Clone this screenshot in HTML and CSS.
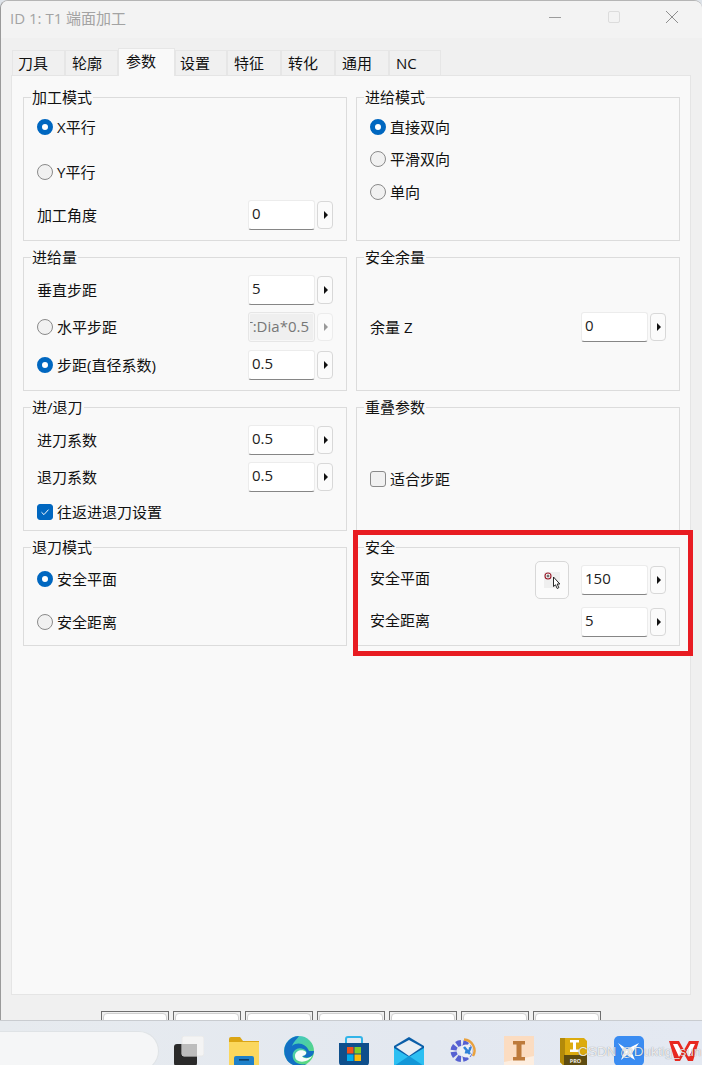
FILE: index.html
```html
<!DOCTYPE html>
<html lang="zh">
<head>
<meta charset="utf-8">
<title>ID 1: T1 端面加工</title>
<link rel="stylesheet" href="styles.css">
</head>
<body>
<div class="window">
  <header class="titlebar">
    <span class="title">ID 1: T1 端面加工</span>
    <div class="winbtns">
      <svg class="winbtn" viewBox="0 0 14 14"><path d="M0 7.5H12" stroke="#9c9c9c" fill="none"/></svg>
      <svg class="winbtn" viewBox="0 0 14 14"><rect x="1.500" y="1.500" width="11" height="11" rx="1.500" fill="#f3f3f3" stroke="#dcdcdc"/></svg>
      <svg class="winbtn" viewBox="0 0 14 14"><path d="M1 1L13 13M13 1L1 13" stroke="#8e8e8e" fill="none"/></svg>
    </div>
  </header>
  <nav class="tabs">
    <span class="tab narrow">刀具</span>
    <span class="tab narrow">轮廓</span>
    <span class="tab active">参数</span>
    <span class="tab tight">设置</span>
    <span class="tab">特征</span>
    <span class="tab">转化</span>
    <span class="tab">通用</span>
    <span class="tab last">NC</span>
  </nav>
  <main class="panel">
    <section class="group">
      <h3 class="legend">加工模式</h3>
      <div class="row t14"><i class="radio on"></i><span class="rl">X平行</span></div>
      <div class="row t15"><i class="radio"></i><span class="rl">Y平行</span></div>
      <div class="row t13"><span>加工角度</span><span class="field"><span class="input">0</span><span class="spin"><b></b></span></span></div>
    </section>
    <section class="group">
      <h3 class="legend">进给模式</h3>
      <div class="row t14"><i class="radio on"></i><span class="rl">直接双向</span></div>
      <div class="row t2"><i class="radio"></i><span class="rl">平滑双向</span></div>
      <div class="row t3"><i class="radio"></i><span class="rl">单向</span></div>
    </section>
    <section class="group">
      <h3 class="legend">进给量</h3>
      <div class="row t17"><span>垂直步距</span><span class="field"><span class="input">5</span><span class="spin"><b></b></span></span></div>
      <div class="row t7"><i class="radio"></i><span class="rl">水平步距</span><span class="field"><span class="input disabled">T:Dia*0.5</span><span class="spin off"><b></b></span></span></div>
      <div class="row t8"><i class="radio on"></i><span class="rl">步距(直径系数)</span><span class="field"><span class="input">0.5</span><span class="spin"><b></b></span></span></div>
    </section>
    <section class="group">
      <h3 class="legend">安全余量</h3>
      <div class="row t54"><span>余量 Z</span><span class="field"><span class="input">0</span><span class="spin"><b></b></span></span></div>
    </section>
    <section class="group">
      <h3 class="legend">进/退刀</h3>
      <div class="row t17"><span>进刀系数</span><span class="field"><span class="input">0.5</span><span class="spin"><b></b></span></span></div>
      <div class="row t7"><span>退刀系数</span><span class="field"><span class="input">0.5</span><span class="spin"><b></b></span></span></div>
      <div class="row t5"><i class="check on"><svg viewBox="0 0 16 16"><path d="M4 8.300L6.800 11L12 5.300" fill="none" stroke="#fff" stroke-width="1.100"/></svg></i><span class="rl">往返进退刀设置</span></div>
    </section>
    <section class="group">
      <h3 class="legend">重叠参数</h3>
      <div class="row t56"><i class="check"></i><span class="rl">适合步距</span></div>
    </section>
    <section class="group">
      <h3 class="legend">退刀模式</h3>
      <div class="row t16"><i class="radio on"></i><span class="rl">安全平面</span></div>
      <div class="row t13"><i class="radio"></i><span class="rl">安全距离</span></div>
    </section>
    <section class="group">
      <h3 class="legend">安全</h3>
      <div class="row t17"><span class="lift">安全平面</span>
        <span class="field">
          <span class="pick"><svg viewBox="0 0 26 26" width="26" height="26"><rect x="5" y="5" width="16" height="16" fill="#efefef"/><circle cx="9" cy="9" r="3" fill="#fff" stroke="#9a1c2a" stroke-width="1.100"/><path d="M7.500 9H10.500M9 7.500V10.500" stroke="#222" stroke-width=".8"/><path d="M14.500 10V19.500L16.500 17.800L18.200 21.500L19.800 20.700L18.200 17H20.800Z" fill="#fff" stroke="#111" stroke-width=".9"/></svg></span>
          <span class="input">150</span><span class="spin"><b></b></span>
        </span>
      </div>
      <div class="row t12"><span class="lift">安全距离</span><span class="field"><span class="input">5</span><span class="spin"><b></b></span></span></div>
    </section>
  </main>
  <div class="actions">
    <span class="action"><span></span></span>
    <span class="action"><span></span></span>
    <span class="action"><span></span></span>
    <span class="action"><span></span></span>
    <span class="action"><span></span></span>
    <span class="action"><span></span></span>
    <span class="action"><span></span></span>
  </div>
</div>
<footer class="taskbar">
  <div class="search"></div>
  <div class="icons">
    <svg class="ti" viewBox="0 0 30 30"><rect x="0" y="8" width="23" height="22" rx="3" fill="#2a2a2a"/><rect x="8" y="0" width="22" height="20" rx="2" fill="#f4f4f4" stroke="#e8e8e8"/><rect x="8" y="8" width="15" height="12" fill="#bdbdbd"/></svg>
    <svg class="ti" viewBox="0 0 30 30"><path d="M0 3a2 2 0 0 1 2-2h9l3 4h16v25H0Z" fill="#dba514"/><rect x="0" y="6" width="30" height="24" fill="#fbd75d"/><path d="M5 22a2 2 0 0 1 2-2h16a2 2 0 0 1 2 2v8H5Z" fill="#1e80c9"/><rect x="10" y="23" width="10" height="1.600" fill="#0b3c66"/></svg>
    <svg class="ti" viewBox="0 0 30 30"><defs><linearGradient id="eg" x1="0" y1="0" x2="1" y2="1"><stop offset="0" stop-color="#3bc2d8"/><stop offset="1" stop-color="#5fdc6c"/></linearGradient></defs><circle cx="15" cy="15" r="15" fill="url(#eg)"/><path d="M15 0A15 15 0 0 0 2 22C5 30 15 32 23 28C13 30 7 24 9 17C11 11 19 11 22 15C24 18 20 20 18 20C24 24 30 20 30 15H25C22 8 14 5 8 10C10 5 13 3 15 0Z" fill="#1270c4"/><path d="M11 20C11 14 19 13 22 16C23 19 19 20 18 20C20 23 24 23 28 20C25 27 11 28 11 20Z" fill="#fff" opacity=".95"/></svg>
    <svg class="ti" viewBox="0 0 30 30"><path d="M7 7V3a2 2 0 0 1 2-2h12a2 2 0 0 1 2 2v4" fill="none" stroke="#32b4e8" stroke-width="2"/><path d="M0 7H30V26a4 4 0 0 1-4 4H4a4 4 0 0 1-4-4Z" fill="#0f4f8c"/><rect x="8" y="11" width="6.500" height="6.500" fill="#f1511b"/><rect x="15.500" y="11" width="6.500" height="6.500" fill="#80cc28"/><rect x="8" y="18.500" width="6.500" height="6.500" fill="#00adef"/><rect x="15.500" y="18.500" width="6.500" height="6.500" fill="#fbbc09"/></svg>
    <svg class="ti" viewBox="0 0 30 30"><path d="M15 1L30 10V30H0V10Z" fill="#0a5ea8"/><path d="M2 11L15 4L28 11L15 20Z" fill="#e8eef4"/><path d="M0 12L15 21L30 12V30H0Z" fill="#2cbff2"/><path d="M0 30L15 20L30 30Z" fill="#1397d8"/></svg>
    <svg class="ti" viewBox="0 0 30 30"><circle cx="12.500" cy="15" r="8" fill="none" stroke="#5560d2" stroke-width="6" stroke-dasharray="4.500 2"/><path d="M15 3.500A11 11 0 0 1 24 20" fill="none" stroke="#e9a13d" stroke-width="2.400"/><circle cx="17" cy="15" r="6.500" fill="#eef1f5"/><path d="M15 11L21 18M21 11A4 4 0 0 1 16 16" fill="none" stroke="#2f83d8" stroke-width="2.600"/></svg>
    <svg class="ti" viewBox="0 0 30 30"><rect width="30" height="30" fill="#fdeee0"/><path d="M0 0H30V20L0 26Z" fill="#fbdcc1"/><path d="M9 5H21V8.500H17.500V21H21V24.500H9V21H12.500V8.500H9Z" fill="#bd7a3b"/></svg>
    <svg class="ti" viewBox="0 0 30 30"><path d="M2 2H25L28 5V30H5L1 26Z" fill="#dcab0f"/><path d="M1 2H6V30H5L1 26Z" fill="#b38a0a"/><rect x="5" y="19" width="23" height="11" fill="#5e4c10"/><path d="M11 4H20V6.500H17V13.500H20V16H11V13.500H14V6.500H11Z" fill="#fff"/><text x="16.500" y="27" class="protext">PRO</text></svg>
    <svg class="ti" viewBox="0 0 30 30"><rect width="30" height="30" rx="5" fill="#3a8cf2"/><path d="M4 7L13 13L25 7L18 17L21 24L13 19L7 24L10 16Z" fill="#fff"/></svg>
    <svg class="ti" viewBox="0 0 30 30"><path d="M0 5H10L15 14L20 5H30L24 25H19L15 18L11 25H6Z" fill="#e8291f"/><path d="M4 8H8.500L13 16L10 21ZM26 8H21.500L17 16L20 21Z" fill="#fff"/></svg>
  </div>
  <span class="watermark">CSDN @Duktig_sun</span>
</footer>
<div class="highlight"></div>
</body>
</html>
```
FILE: styles.css
```css
* { box-sizing: border-box; }
html, body { margin: 0; height: 1065px; overflow: hidden; }
body { position: relative; background: #dfe4ea; font-family: "Open Sans", "Noto Sans CJK SC", sans-serif; font-size: 15px; color: #111; }

.window { height: 1020px; overflow: hidden; background: #f0f0f0; border-left: 1px solid #9a9a9a; border-top: 1px solid #b5b5b5; border-top-left-radius: 8px; border-top-right-radius: 8px; }

.titlebar { height: 37px; background: #f3f3f3; display: flex; align-items: center; justify-content: space-between; }
.title { margin-left: 9px; margin-top: -4px; color: #a3a3a3; line-height: 36px; }
.winbtns { display: flex; gap: 44px; margin-right: 23px; margin-top: -5px; }
.winbtn { width: 14px; height: 14px; display: block; }

.tabs { height: 37px; display: flex; align-items: flex-end; padding-left: 11px; }
.tab { height: 25px; padding-left: 6px; width: 54px; border: 1px solid #e6e6e6; border-bottom: 0; background: #f0f0f0; line-height: 25px; white-space: nowrap; }
.tab.narrow { width: 53px; padding-left: 5px; }
.tab.narrow + .tab.narrow { padding-left: 6px; }
.tab.active { height: 28px; width: 57px; margin-bottom: -1px; padding-left: 7px; background: #f9f9f9; line-height: 25px; position: relative; z-index: 1; }
.tab.tight { width: 52px; padding-left: 4px; }
.tab.last { width: 52px; }

.panel { width: 680px; height: 920px; margin-left: 10px; padding: 21px 10px 0 11px; background: #f9f9f9; border: 1px solid #e5e5e5; display: grid; grid-template-columns: 324px 324px; grid-template-rows: 144px 134px 124px 99px; column-gap: 9px; row-gap: 16px; align-content: start; }

.group { position: relative; border: 1px solid #dcdcdc; padding: 0 13px; min-width: 0; }
.legend { position: absolute; left: 7px; top: -11px; margin: 0; padding: 0 1px; background: #f9f9f9; font-weight: 400; font-size: 15px; line-height: 20px; }

.row { height: 30px; display: flex; align-items: center; line-height: 20px; white-space: nowrap; }
.t2 { margin-top: 2px; }
.t3 { margin-top: 3px; }
.t5 { margin-top: 5px; }
.t7 { margin-top: 7px; }
.t8 { margin-top: 8px; }
.t12 { margin-top: 12px; }
.t13 { margin-top: 13px; }
.t14 { margin-top: 14px; }
.t15 { margin-top: 15px; }
.t16 { margin-top: 16px; }
.t17 { margin-top: 17px; }
.t54 { margin-top: 54px; }
.t56 { margin-top: 56px; }

.radio { width: 16px; height: 16px; flex: none; border-radius: 50%; border: 1px solid #8a8a8a; background: #f1f1f1; }
.radio.on { border: 5px solid #0067c0; background: #fff; }
.check { width: 16px; height: 16px; flex: none; border-radius: 3px; border: 1px solid #8a8a8a; background: #f1f1f1; display: block; }
.check.on { background: #0067c0; border-color: #0067c0; }
.check svg { display: block; width: 14px; height: 14px; }
.rl { margin-left: 4px; }
.lift { margin-bottom: 5px; }

.field { margin-left: auto; display: flex; align-items: center; gap: 2px; }
.input { width: 67px; height: 30px; padding-left: 3px; background: #fff; border: 1px solid #ececec; border-bottom: 1px solid #868686; border-radius: 3px; line-height: 25px; color: #222; }
.input.disabled { display: flex; justify-content: flex-end; overflow: hidden; padding: 0 4px 0 0; background: #efefef; border: 2px solid #f7f7f7; outline: 1px solid #e6e6e6; outline-offset: -1px; color: #777; }
.spin { width: 16px; height: 28px; display: flex; align-items: center; justify-content: center; background: #fbfbfb; border: 1px solid #d8d8d8; border-radius: 4px; }
.spin b { display: block; width: 0; height: 0; border-left: 4px solid #111; border-top: 4px solid transparent; border-bottom: 4px solid transparent; margin-left: 1px; }
.spin.off { border-color: #ececec; }
.spin.off b { border-left-color: #999; }
.pick { width: 34px; height: 38px; margin-right: 10px; display: flex; align-items: center; justify-content: center; background: #fbfbfb; border: 1px solid #d8d8d8; border-radius: 5px; }

.actions { display: flex; gap: 4px; margin: 16px 0 0 100px; }
.action { width: 68px; height: 20px; padding: 1px; border: 1px solid #6e6e6e; background: #f0f0f0; }
.action span { display: block; height: 30px; background: #fff; border: 1px solid #d0d0d0; border-radius: 4px; }

.taskbar { position: relative; height: 45px; background: linear-gradient(90deg, #e7ebef, #e3e8f0 60%, #e4e9f2); border-top: 1px solid #c9ccd0; display: flex; overflow: hidden; }
.search { width: 159px; height: 40px; margin-top: 10px; background: #f5f6f7; border: 1px solid #dfe3e6; border-radius: 0 20px 20px 0; border-left: 0; flex: none; }
.icons { display: flex; align-items: flex-start; gap: 25px; margin-left: 15px; padding-top: 15px; }
.ti { width: 30px; height: 30px; flex: none; display: block; }
.protext { font-size: 5.5px; font-weight: 700; fill: #eee; text-anchor: middle; }
.watermark { position: absolute; left: 578px; top: 22px; color: rgba(255, 255, 255, .85); font-size: 13.5px; line-height: 18px; font-family: "Liberation Sans", sans-serif; text-shadow: 0 0 1px rgba(0, 0, 0, .45); white-space: nowrap; }

.highlight { position: absolute; left: 353px; top: 530px; width: 340px; height: 126px; border: 5px solid #e81c22; pointer-events: none; }
```
